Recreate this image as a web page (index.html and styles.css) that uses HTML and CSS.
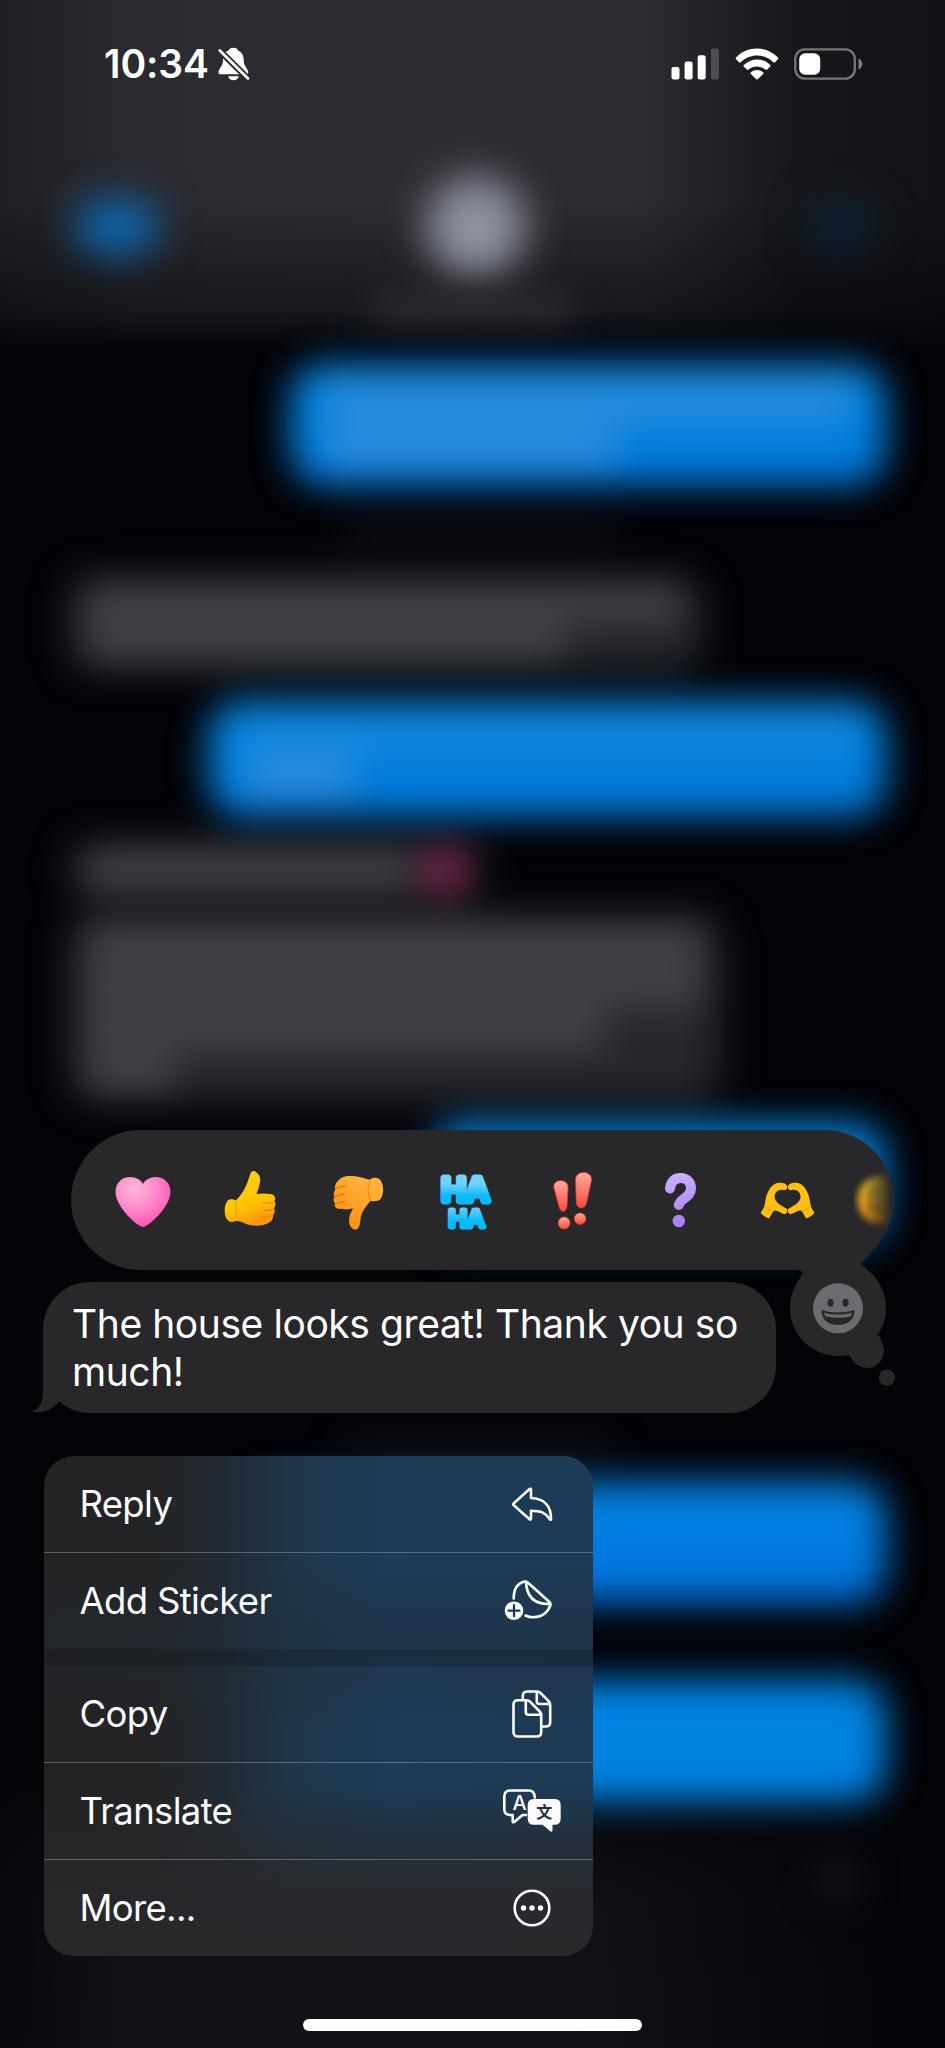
FILE: index.html
```html
<!DOCTYPE html>
<html lang="en">
<head>
<meta charset="utf-8">
<title>Messages</title>
<link rel="stylesheet" href="styles.css">
</head>
<body>
<div class="phone">
  <div class="backdrop" aria-hidden="true">
    <div class="chat-header">
      <div class="chat-nav">
        <span class="back"></span>
        <span class="avatar"></span>
        <span class="facetime"></span>
      </div>
      <span class="contact"></span>
    </div>
    <div class="conversation">
      <div class="sent s1"><i class="l1"></i><i class="l2"></i></div>
      <div class="stamp t1"></div>
      <div class="received r1"><i></i><i class="short"></i></div>
      <div class="sent s2"><i class="l1"></i><i class="l2"></i></div>
      <div class="received r2"><i></i><b></b></div>
      <div class="received r3"><i></i><i></i><i class="mid"></i><i class="tiny"></i></div>
      <div class="sent s3"></div>
      <div class="stamp t2"></div>
      <div class="sent s4"></div>
      <div class="sent s5"></div>
      <div class="composer"></div>
    </div>
  </div>

  <main class="overlay">
    <header class="status">
      <div class="clock">
        <span class="time">10:34</span>
        <svg width="32" height="34" viewBox="0 0 32 34"><path fill="#fff" d="M15.4.8C12.5.8 11 2 10.5 3.5 6 5.5 5 9.500 5 14c0 5-4 7-4.500 11-.2 1.500.5 2.300 2 2.300H28c1.500 0 2.500-.8 2.200-2.300-.7-4-4.400-6-4.400-11 0-4.500-1.300-8.500-5.800-10.500C19.500 2 18.300.8 15.400.8zM10.300 29.300h10.400c-.5 5.300-9.900 5.300-10.400 0z"/><path d="M0 2L32 33.500" stroke="#2c2c31" stroke-width="6.500"/><path d="M1.800 3.500L30 31.500" stroke="#fff" stroke-width="2.700" stroke-linecap="round"/></svg>
      </div>
      <div class="indicators">
        <svg width="49" height="32" viewBox="0 0 49 32" fill="#fff"><rect x=".5" y="19" width="8" height="12.500" rx="2.200"/><rect x="13.600" y="13.500" width="8" height="18" rx="2.200"/><rect x="26.700" y="7.200" width="8" height="24.300" rx="2.200"/><rect x="40" y=".5" width="8" height="31" rx="2.200" fill="#4f4f53"/></svg>
        <svg width="44" height="32" viewBox="0 0 44 32" fill="#fff"><path d="M1 9.500C12-2.500 32-2.500 43 9.500c.5.600.5 1.100 0 1.700l-3 3c-.6.500-1.200.5-1.700 0-9-9-23.600-9-32.600 0-.5.500-1.100.5-1.700 0l-3-3C.5 10.600.5 10.100 1 9.500z"/><path d="M8.800 17c7.400-7.500 19-7.500 26.400 0 .5.600.5 1.100 0 1.600l-3 3c-.6.600-1.100.5-1.700 0-4.800-4.300-12.200-4.300-17 0-.6.500-1.100.6-1.700 0l-3-3c-.5-.5-.5-1 0-1.600z"/><path d="M16 24.300c3.500-3 8.500-3 12 0 .7.600.7 1.200.1 1.800L23 31.100c-.7.600-1.300.6-2 0l-5.100-5c-.6-.6-.6-1.200.1-1.800z"/></svg>
        <svg width="69" height="32" viewBox="0 0 69 32"><rect x="1.300" y="1.300" width="59.500" height="29.400" rx="9.500" fill="none" stroke="#77777b" stroke-width="2.300"/><rect x="5.200" y="5.200" width="21" height="21.600" rx="6" fill="#fff"/><path d="M64.500 10.500v11c5-1.500 5-9.500 0-11z" fill="#808084"/></svg>
      </div>
    </header>

    <section class="reactions">
      <svg class="tapback" viewBox="0 0 56 56"><defs><radialGradient id="pink" cx=".35" cy=".25" r=".8"><stop offset="0" stop-color="#ffb9dc"/><stop offset=".45" stop-color="#ff8ccb"/><stop offset="1" stop-color="#fb4fb2"/></radialGradient></defs><path fill="url(#pink)" d="M28 55C23 55 .5 35 .5 20 .5 11 7 5 15 5c6 0 11 3 13 7 2-4 7-7 13-7 8 0 14.500 6 14.500 15C55.500 35 33 55 28 55z"/></svg>
      <svg class="tapback" viewBox="0 0 56 56"><defs><linearGradient id="gold" x1="0" y1="0" x2=".3" y2="1"><stop offset="0" stop-color="#ffd21a"/><stop offset=".7" stop-color="#ffc400"/><stop offset="1" stop-color="#f99a12"/></linearGradient></defs><path fill="url(#gold)" d="M28 3c1-4 3.500-5 6-3 4.500 3 4.800 7.500 3.500 12.500-.8 4-2 6.500-2.900 9.500 5-.8 9-.8 13 0 5.500 0 6.500 4.500 4.900 7 1.500 2 1.300 5-.5 7 1.200 2.500.8 5.500-1 7.200.6 3-1 6-4 7.500-6 3.500-17 4-24 .8-3.500-1.700-6-2.800-9-2.500-5 2.500-9 .5-10.500-4.500-1.500-5-1-11 1.500-15 2-3 6-2.500 9-1 4-4.500 6.500-7.500 8.500-11.500 2-4 4-9.500 5.500-14z"/><path d="M41 30.500c3 1 7 .8 10.500-.5M42 38c3 .8 6 .6 9-.7M41 45c3 .8 6 .2 9-1.500" fill="none" stroke="#ea8b05" stroke-width="1.300" stroke-linecap="round"/><path d="M14.500 31c-1.300 5-1.300 11 .5 16" fill="none" stroke="#f0a008" stroke-width="1.200" stroke-linecap="round"/></svg>
      <svg class="tapback down" viewBox="0 0 56 60"><defs><linearGradient id="orange" x1="0" y1="1" x2=".6" y2="0"><stop offset="0" stop-color="#ff8a0c"/><stop offset="1" stop-color="#ffb33d"/></linearGradient></defs><path fill="url(#orange)" d="M8.600 8.300c3-4 8-4.300 12-4.300 7 0 13 2 19 3.700 4-2.700 9-2.700 11.400 1.300 3 5 2.700 12 .3 17-1.800 3.500-6.300 3.500-11 3-3 4-6.500 8-8.300 12-1.600 4-1.500 8-2.700 13-1.500 4.500-5.500 4.500-8 1.500-4.500-5.500-1.500-13 1.700-19.200-4 1.400-7.500 1.400-11.500.5-5 .7-7.500-1.500-6.500-5.500-2-2-2-4.500-.7-6.300-1-2.500-.5-5 .8-7-.5-4 .5-7.500 3.500-9.700z"/><path d="M5.500 17c3-2.500 6-3 9.500-2.500M5 25c3-2.500 6-3 9.500-2.500M5.500 32c3-2 6-2.500 9-2.300" fill="none" stroke="#ef7000" stroke-width="1.400" stroke-linecap="round"/><path d="M40 9c-2.500 6-2.500 13 .5 19" fill="none" stroke="#f58812" stroke-width="1.200" stroke-linecap="round"/></svg>
      <svg class="tapback haha" viewBox="0 0 56 56"><defs><linearGradient id="sky" gradientUnits="userSpaceOnUse" x1="0" y1="2" x2="0" y2="57"><stop offset="0" stop-color="#6fd3fb"/><stop offset=".18" stop-color="#6fd3fb"/><stop offset=".4" stop-color="#08baff"/><stop offset=".57" stop-color="#08baff"/><stop offset=".6" stop-color="#6fd3fb"/><stop offset=".85" stop-color="#08baff"/></linearGradient></defs><text fill="url(#sky)" stroke="url(#sky)" stroke-linejoin="round"><tspan x="4.500" y="29" font-size="31.500" stroke-width="7" textLength="47.500" lengthAdjust="spacingAndGlyphs">HA</tspan><tspan x="11.500" y="54.500" font-size="23.500" stroke-width="5" textLength="36" lengthAdjust="spacingAndGlyphs">HA</tspan></text></svg>
      <svg class="tapback" viewBox="0 0 56 56"><defs><linearGradient id="red" x1="0" y1="0" x2="0" y2="1"><stop offset="0" stop-color="#ffab98"/><stop offset="1" stop-color="#fb4a3e"/></linearGradient></defs><g fill="url(#red)" stroke="#f2382c" stroke-width=".7"><path d="M8.700 15c0-8.500 14-8.500 14.400 0L22 34c-.8 7-6.500 7-7.800 1z"/><path d="M30.500 7.500C31-2.300 47-1.800 46.500 8L41.500 31c-1.500 6.500-9 6.500-10.200 0z"/><circle cx="19.100" cy="51" r="6"/><circle cx="35.100" cy="46.700" r="5.800"/></g></svg>
      <svg class="tapback" viewBox="0 0 56 56"><defs><linearGradient id="violet" gradientUnits="userSpaceOnUse" x1="20" y1="0" x2="34" y2="56"><stop offset="0" stop-color="#cdb2fb"/><stop offset="1" stop-color="#a57bf5"/></linearGradient></defs><path d="M18 16.500C19 8 24 6 28.500 6 35 6 39 10.500 39 16.500 39 25.500 28.500 26 26.800 33" fill="none" stroke="url(#violet)" stroke-width="10" stroke-linecap="round"/><circle cx="26.800" cy="49" r="6.200" fill="url(#violet)"/></svg>
      <svg class="tapback" viewBox="0 0 56 56"><defs><g id="hand"><path fill="#ffbe12" d="M.6 40.700C3 37.500 4.500 35 5 31c1-9 5-18 12-20 4-1 10 0 10.300 3.500.2 3-2 4.500-5 3.300-5-.5-8.500 4-7.500 8.500 1 5 8.500 8.500 12 10.500 1.500 2.500-.3 6.200-3.300 5.200-4-2-7.500-4-9-3.500-2.500 1.500-3.500 5-5.300 8C6 45.500 3 43.500.6 40.700z"/><path fill="none" stroke="#f0a010" stroke-width="1.200" stroke-linecap="round" d="M5.500 35c2 2 4 3.500 7 4"/></g></defs><use href="#hand"/><use href="#hand" transform="translate(55.200 0) scale(-1 1)"/></svg>
      <svg class="tapback fading" viewBox="0 0 56 56"><defs><linearGradient id="dusk" x1="0" y1="0" x2="0" y2="1"><stop offset="0" stop-color="#c6a52a"/><stop offset="1" stop-color="#cf820e"/></linearGradient></defs><circle cx="28" cy="28" r="24" fill="url(#dusk)"/><path d="M16 33q7 4 14 2" fill="none" stroke="#7d611d" stroke-width="3"/><ellipse cx="22" cy="22" rx="4" ry="3" fill="#8a7a38"/></svg>
      <svg class="thought" width="120" height="140" viewBox="0 0 120 140"><g fill="#28282a"><path d="M0 8V19H17C22 19 24 21 22 24L16 33 58 57 96 28C92 22 86 18 83 15 81 13 81 12 83 10.500L92 2 60 0z"/><circle cx="58" cy="57" r="48"/><circle cx="87" cy="100" r="17"/><path d="M66 105Q70 104 73 110L96 86.500Q99 92 101 94L100 84z"/><circle cx="107" cy="126.600" r="8.200"/></g><circle cx="58" cy="57.300" r="25" fill="#6b6b70"/><g fill="#28282a"><ellipse cx="50.500" cy="51.700" rx="3" ry="3.900"/><ellipse cx="65.500" cy="51.700" rx="3" ry="3.900"/><path d="M41.500 59Q58 64 74.500 59C75 68 68 74 58 74S41 68 41.500 59z"/></g><path d="M44 61.700Q58 65.500 72 61.700Q71.500 64 70.500 65.500Q58 68 45.500 65.500Q44.500 64 44 61.700z" fill="#6b6b70"/></svg>
    </section>

    <p class="message">The house looks great! Thank you so much!
      <svg class="tail" width="32" height="44" viewBox="0 0 32 44"><path fill="#28282a" d="M12 0V20C12 33 8 40 0 41.500 10 43.500 21 40 27 33L32 20V0z"/></svg>
    </p>

    <nav class="menu">
      <div class="item"><span>Reply</span><svg width="58" height="34" viewBox="-9 0 58 34"><path d="M1.800 16.300L17.300 2.200Q19 1 19 3V11C32 11.500 39 19 39 31.500Q39 34 37.600 32C34 26 29 23.800 19 23.800V31.300Q19 33.500 17.300 32L1.800 18.300Q.8 17.300 1.800 16.300z" class="line"/></svg></div>
      <div class="item"><span>Add Sticker</span><svg width="58" height="42" viewBox="-2 0 58 42"><path class="line" d="M8.700 18.500C8.700 9 13 3 20 1.600Q21.500 1.300 23 2.700L44.500 22Q46 23.500 45.300 25.500C42.500 33 36 37.300 28.500 37.300Q24 37.300 20.500 35.500M21 1.600C21.500 16 29 24.500 45 24"/><circle cx="9" cy="30.700" r="9.300" fill="#fafcff"/><path d="M9 25.200v11M3.500 30.700h11" stroke="#20364a" stroke-width="2.200" stroke-linecap="round"/></svg></div>
      <div class="gap"></div>
      <div class="item"><span>Copy</span><svg width="58" height="48" viewBox="-9.500 -.5 58 48"><path class="line" d="M5.500 9.700H14Q16 9.700 17.500 11.200L27.200 21Q28.700 22.500 28.700 24.500V41.500Q28.700 46 24.200 46H5.500Q1 46 1 41.500V14.200Q1 9.700 5.500 9.700zM13.300 10V21.500Q13.300 24.300 16 24.300H28.500M10.300 9.500V5.500Q10.300 1 14.800 1H24.500Q26.500 1 28 2.500L36.200 10.700Q37.700 12.200 37.700 14.200V31.500Q37.700 36 33.200 36H29M24.300 1.300V11Q24.300 13.500 26.800 13.500H37.500"/></svg></div>
      <div class="item"><span>Translate</span><svg width="58" height="44" viewBox="0 0 58 44"><path class="line" d="M23 26H19.500L11.300 33Q9.700 34 9.700 32V26H7.300Q1.300 26 1.300 20V7.600Q1.300 1.500 7.300 1.500H25.800Q31.500 1.500 31.800 8.500"/><text x="16.500" y="20.800" class="latin">A</text><path fill="#fafcff" d="M30.700 10H51.700Q57.700 10 57.700 16V29.700Q57.700 35.700 51.700 35.700H49.500V41.500Q49 43.500 47 42L39.500 35.700H30.700Q24.700 35.700 24.700 29.700V16Q24.700 10 30.700 10z"/><text x="41.300" y="29" class="han">文</text></svg></div>
      <div class="item"><span>More...</span><svg width="58" height="38" viewBox="-10 0 58 38"><circle cx="19" cy="19" r="17.300" class="line"/><g fill="#fafcff"><circle cx="10.500" cy="19" r="2.700"/><circle cx="19" cy="19" r="2.700"/><circle cx="27.500" cy="19" r="2.700"/></g></svg></div>
    </nav>

    <div class="home"></div>
  </main>
</div>
</body>
</html>
```
FILE: styles.css
```css
* { box-sizing: border-box; }
body { margin: 0; background: #030308; font-family: Inter, "Liberation Sans", sans-serif; color: #fff; }
.phone { position: relative; width: 945px; height: 2048px; overflow: hidden; }

.backdrop { position: absolute; inset: 0; overflow: hidden; background: linear-gradient(#030308 1760px, #111116 1900px, #121217); }
.backdrop::before {
  content: ""; position: absolute; inset: 1740px 0 0;
  background: linear-gradient(90deg, rgba(3,3,8,.7), transparent 15%, transparent 60%, rgba(3,3,8,.9) 92%);
}
.chat-header {
  height: 350px; padding-top: 174px;
  background: linear-gradient(transparent 200px, rgba(3,3,8,.5) 310px, #030308 350px),
    linear-gradient(90deg, #1f1f24, #2a2a30 14%, #2d2d33 45%, #2b2b31 68%, #17171b 84%, #131317);
}
.chat-nav { display: flex; justify-content: space-between; align-items: center; height: 106px; padding: 0 70px 0 76px; filter: blur(20px); }
.back { width: 82px; height: 50px; border-radius: 25px; background: #0b6dba; }
.avatar { width: 100px; height: 100px; border-radius: 50%; background: #9093a0; margin-right: 13px; }
.facetime { width: 68px; height: 44px; border-radius: 20px; background: #0b2235; }
.contact { display: block; width: 200px; height: 26px; margin: 14px auto 0; background: #322f35; filter: blur(16px); }

.conversation { display: flex; flex-direction: column; align-items: flex-start; height: 1698px; padding: 14px 59px 0 68px; filter: blur(18px); }
.sent { align-self: flex-end; flex: none; height: 122px; border-radius: 34px; background: linear-gradient(#0484de, #007fdc 60%, #0074d6); display: flex; flex-direction: column; justify-content: center; gap: 4px; padding: 0 36px; }
.sent i { height: 42px; background: #328edc; opacity: .85; }
.received { flex: none; border-radius: 28px; background: #26272d; padding: 8px 18px; display: flex; flex-direction: column; justify-content: center; gap: 6px; }
.received i { flex: 1; background: #434449; }
.stamp { align-self: center; flex: none; width: 260px; height: 20px; background: #101015; }
.s1 { width: 596px; }
.s1 .l2 { width: 290px; }
.t1 { margin-top: 38px; }
.r1 { width: 634px; height: 94px; margin-top: 32px; }
.r1 .short { width: 480px; }
.s2 { width: 678px; height: 116px; margin-top: 31px; }
.s2 .l1 { height: 30px; opacity: .45; }
.s2 .l2 { width: 110px; }
.r2 { width: 414px; height: 56px; margin-top: 25px; flex-direction: row; }
.r2 b { width: 50px; background: #722549; border-radius: 20px; margin: -6px -6px -6px 6px; }
.r3 { width: 654px; height: 186px; margin-top: 17px; }
.r3 .mid { width: 520px; }
.r3 .tiny { width: 90px; }
.s3 { width: 456px; margin-top: 22px; }
.t2 { margin-top: 194px; }
.s4 { width: 640px; margin-top: 23px; background: linear-gradient(#0484e0, #007be0 50%, #006fd8); }
.s5 { width: 630px; margin-top: 76px; background: #0082e0; }
.composer { width: 44px; height: 46px; border-radius: 50%; background: #15151a; align-self: flex-end; margin: 54px 26px 0 0; }

.overlay { position: relative; display: flex; flex-direction: column; height: 2048px; padding-bottom: 17.500px; }
.status { display: flex; justify-content: space-between; height: 127px; padding: 0 82px 0 104px; align-items: center; }
.clock, .indicators { display: flex; align-items: center; }
.clock { gap: 9px; }
.time { font-size: 39px; font-weight: 600; letter-spacing: -.1px; }
.indicators { gap: 15px; }

.reactions { position: relative; display: flex; align-items: center; gap: 51.600px; width: 823px; height: 140px; margin: auto 0 0 71px; padding-left: 43.500px; border-radius: 70px; background: #28282a; }
.tapback { flex: none; width: 56px; height: 56px; overflow: visible; }
.down { height: 60px; margin-top: 4px; }
.haha { font-weight: 500; }
.fading { margin-left: -15px; filter: blur(3px); -webkit-mask-image: linear-gradient(90deg, #000 20%, transparent 68%); mask-image: linear-gradient(90deg, #000 20%, transparent 68%); }
.thought { position: absolute; left: 709px; top: 121px; }

.message { position: relative; width: 733px; height: 131px; margin: 12px 0 0 43px; padding: 18px 20px 0 29px; border-radius: 47px; background: #28282a; font-size: 39px; line-height: 48px; letter-spacing: -.43px; }
.tail { position: absolute; left: -12px; bottom: -1px; }

.menu {
  width: 549px; margin: 43px 0 0 44px; border-radius: 30px; overflow: hidden;
  background:
    linear-gradient(rgba(40,40,43,0) 66%, rgba(40,40,43,.55) 76%, rgba(40,40,43,.93) 87%, #28282b),
    linear-gradient(transparent 22%, rgba(34,45,58,.38) 36%, transparent 54%),
    linear-gradient(90deg, #232324, #232426 20%, #212a32 32%, #1f3749 45%, #1d3b56 62%, #1e3a54);
}
.item { display: flex; align-items: center; justify-content: space-between; height: 96.400px; padding: 0 32px 0 35.500px; font-size: 36.500px; letter-spacing: -.68px; color: #fafcff; }
.item + .item { height: 96.600px; border-top: 1.400px solid rgba(190,210,225,.35); }
.gap { height: 17.400px; background: rgba(0,0,0,.16); }
.line { fill: none; stroke: #fafcff; stroke-width: 2.600; stroke-linecap: round; stroke-linejoin: round; }
.latin, .han { text-anchor: middle; letter-spacing: 0; }
.latin { font-size: 20px; font-weight: 500; fill: #fafcff; }
.han { font: 700 16px "Noto Sans CJK SC", sans-serif; fill: #20303e; }

.home { width: 339px; height: 11.500px; border-radius: 6px; margin: 63.500px 0 0 303px; background: #fff; }
```
